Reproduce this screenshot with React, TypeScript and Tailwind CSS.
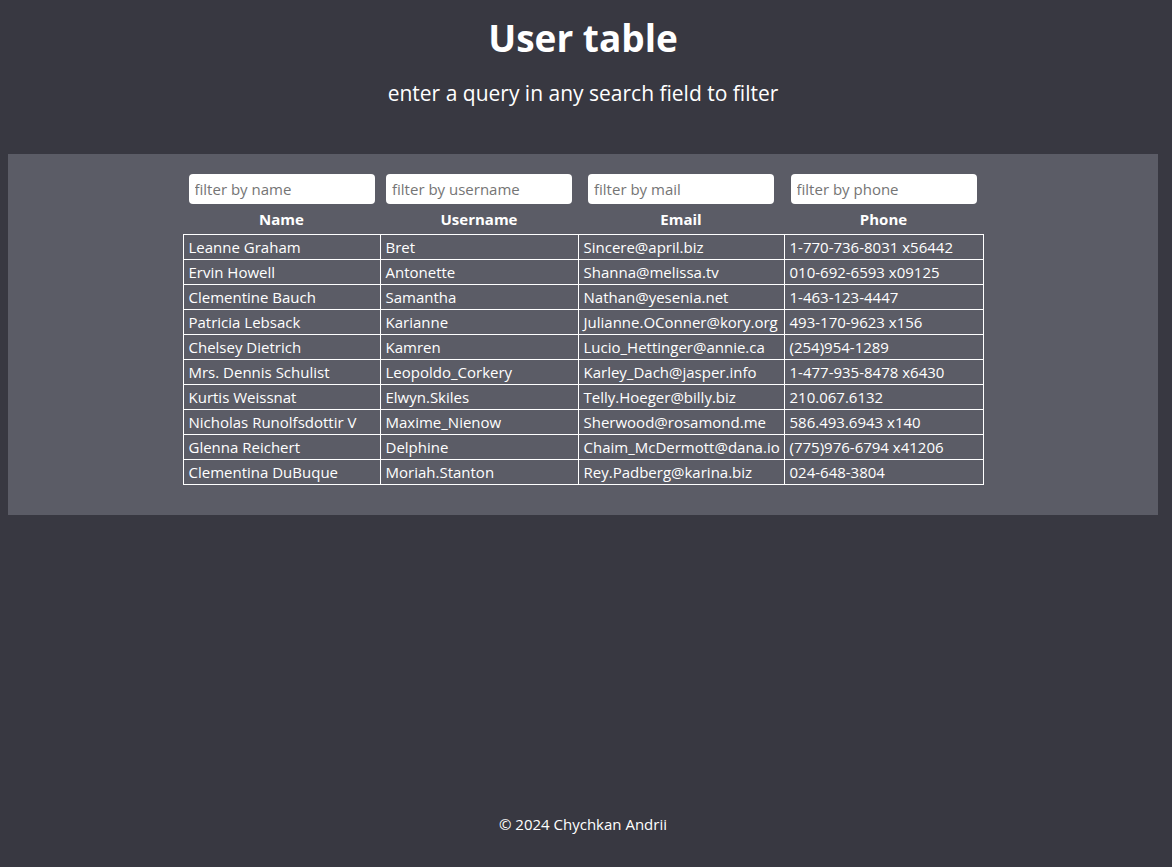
const users = [
  ["Leanne Graham", "Bret", "Sincere@april.biz", "1-770-736-8031 x56442"],
  ["Ervin Howell", "Antonette", "Shanna@melissa.tv", "010-692-6593 x09125"],
  ["Clementine Bauch", "Samantha", "Nathan@yesenia.net", "1-463-123-4447"],
  ["Patricia Lebsack", "Karianne", "Julianne.OConner@kory.org", "493-170-9623 x156"],
  ["Chelsey Dietrich", "Kamren", "Lucio_Hettinger@annie.ca", "(254)954-1289"],
  ["Mrs. Dennis Schulist", "Leopoldo_Corkery", "Karley_Dach@jasper.info", "1-477-935-8478 x6430"],
  ["Kurtis Weissnat", "Elwyn.Skiles", "Telly.Hoeger@billy.biz", "210.067.6132"],
  ["Nicholas Runolfsdottir V", "Maxime_Nienow", "Sherwood@rosamond.me", "586.493.6943 x140"],
  ["Glenna Reichert", "Delphine", "Chaim_McDermott@dana.io", "(775)976-6794 x41206"],
  ["Clementina DuBuque", "Moriah.Stanton", "Rey.Padberg@karina.biz", "024-648-3804"],
];

const filters = ["filter by name", "filter by username", "filter by mail", "filter by phone"];
const headers = ["Name", "Username", "Email", "Phone"];
const widths = ["w-[197px]", "w-[198px]", "w-[206px]", "w-[199px]"];

export default function App() {
  return (
    <div className="min-h-[867px] w-full bg-[#383841] text-white font-['Open_Sans',sans-serif] flex flex-col pr-[6px]">
      <header className="flex flex-col items-center pt-[14px]">
        <h1 className="text-[37px] font-bold leading-[48px]">User table</h1>
        <p className="text-[21px] leading-[28px] mt-[17px]">enter a query in any search field to filter</p>
      </header>

      <main className="mx-2 mt-[47px] bg-[#5b5c66] pt-5 pb-[30px] flex justify-center">
        <table className="border-collapse table-fixed w-[800px] text-[15px]">
          <thead>
            <tr>
              {filters.map((f, i) => (
                <th key={f} className={`${widths[i]} p-0 h-[30px]`}>
                  <input
                    placeholder={f}
                    className="w-[186px] h-[30px] bg-white rounded-[4px] px-[6px] text-[15px] text-black placeholder:text-[#757575] outline-none font-normal"
                  />
                </th>
              ))}
            </tr>
            <tr>
              {headers.map((h) => (
                <th key={h} className="font-bold text-[15px] h-[30px] p-0 align-middle">
                  {h}
                </th>
              ))}
            </tr>
          </thead>
          <tbody>
            {users.map((u) => (
              <tr key={u[0]}>
                {u.map((c, i) => (
                  <td key={i} className="border border-white h-[25px] py-0 pl-[5px] pr-0 leading-[24px] whitespace-nowrap overflow-hidden">
                    {c}
                  </td>
                ))}
              </tr>
            ))}
          </tbody>
        </table>
      </main>

      <footer className="mt-auto pb-[32px] text-center text-[15px]">© 2024 Chychkan Andrii</footer>
    </div>
  );
}
